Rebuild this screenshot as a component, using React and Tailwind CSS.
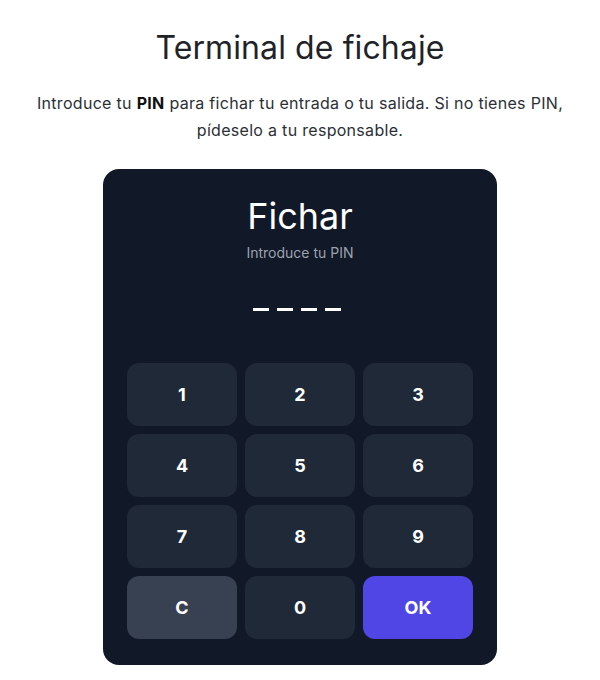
import React from "react";

const keys = ["1", "2", "3", "4", "5", "6", "7", "8", "9"];

export default function App() {
  return (
    <div className="min-h-[680px] w-[600px] bg-white flex flex-col items-center font-['Inter',sans-serif]">
      <h1 className="mt-[28px] text-[32px] leading-[40px] text-[#1f2328] font-normal tracking-[0.1px]">
        Terminal de fichaje
      </h1>
      <p className="mt-[22px] px-5 text-center text-[16px] leading-[27px] text-[#2b2f36] tracking-[0.3px]">
        Introduce tu <strong className="font-bold text-[#111]">PIN</strong> para fichar tu entrada o tu salida. Si no tienes PIN, pídeselo a tu responsable.
      </p>
      <div className="mt-[25px] w-[394px] rounded-2xl bg-[#111827] px-6 pt-[27px] pb-[26px]">
        <div className="flex flex-col items-center">
          <div className="text-[36px] leading-[40px] text-white font-normal">Fichar</div>
          <div className="mt-[7px] text-[14px] leading-[20px] text-[#9ca3af]">Introduce tu PIN</div>
          <div className="mt-[45px] mr-[6px] flex gap-[8px]">
            <div className="h-[3px] w-[16px] bg-white"></div>
            <div className="h-[3px] w-[16px] bg-white"></div>
            <div className="h-[3px] w-[16px] bg-white"></div>
            <div className="h-[3px] w-[16px] bg-white"></div>
          </div>
        </div>
        <div className="mt-[52px] grid grid-cols-3 gap-2">
          {keys.map((k) => (
            <button key={k} className="h-[63px] rounded-xl bg-[#1f2937] text-white text-[18px] font-bold">
              {k}
            </button>
          ))}
          <button className="h-[63px] rounded-xl bg-[#374151] text-white text-[18px] font-bold">C</button>
          <button className="h-[63px] rounded-xl bg-[#1f2937] text-white text-[18px] font-bold">0</button>
          <button className="h-[63px] rounded-xl bg-[#4f46e5] text-white text-[18px] font-bold">OK</button>
        </div>
      </div>
    </div>
  );
}
